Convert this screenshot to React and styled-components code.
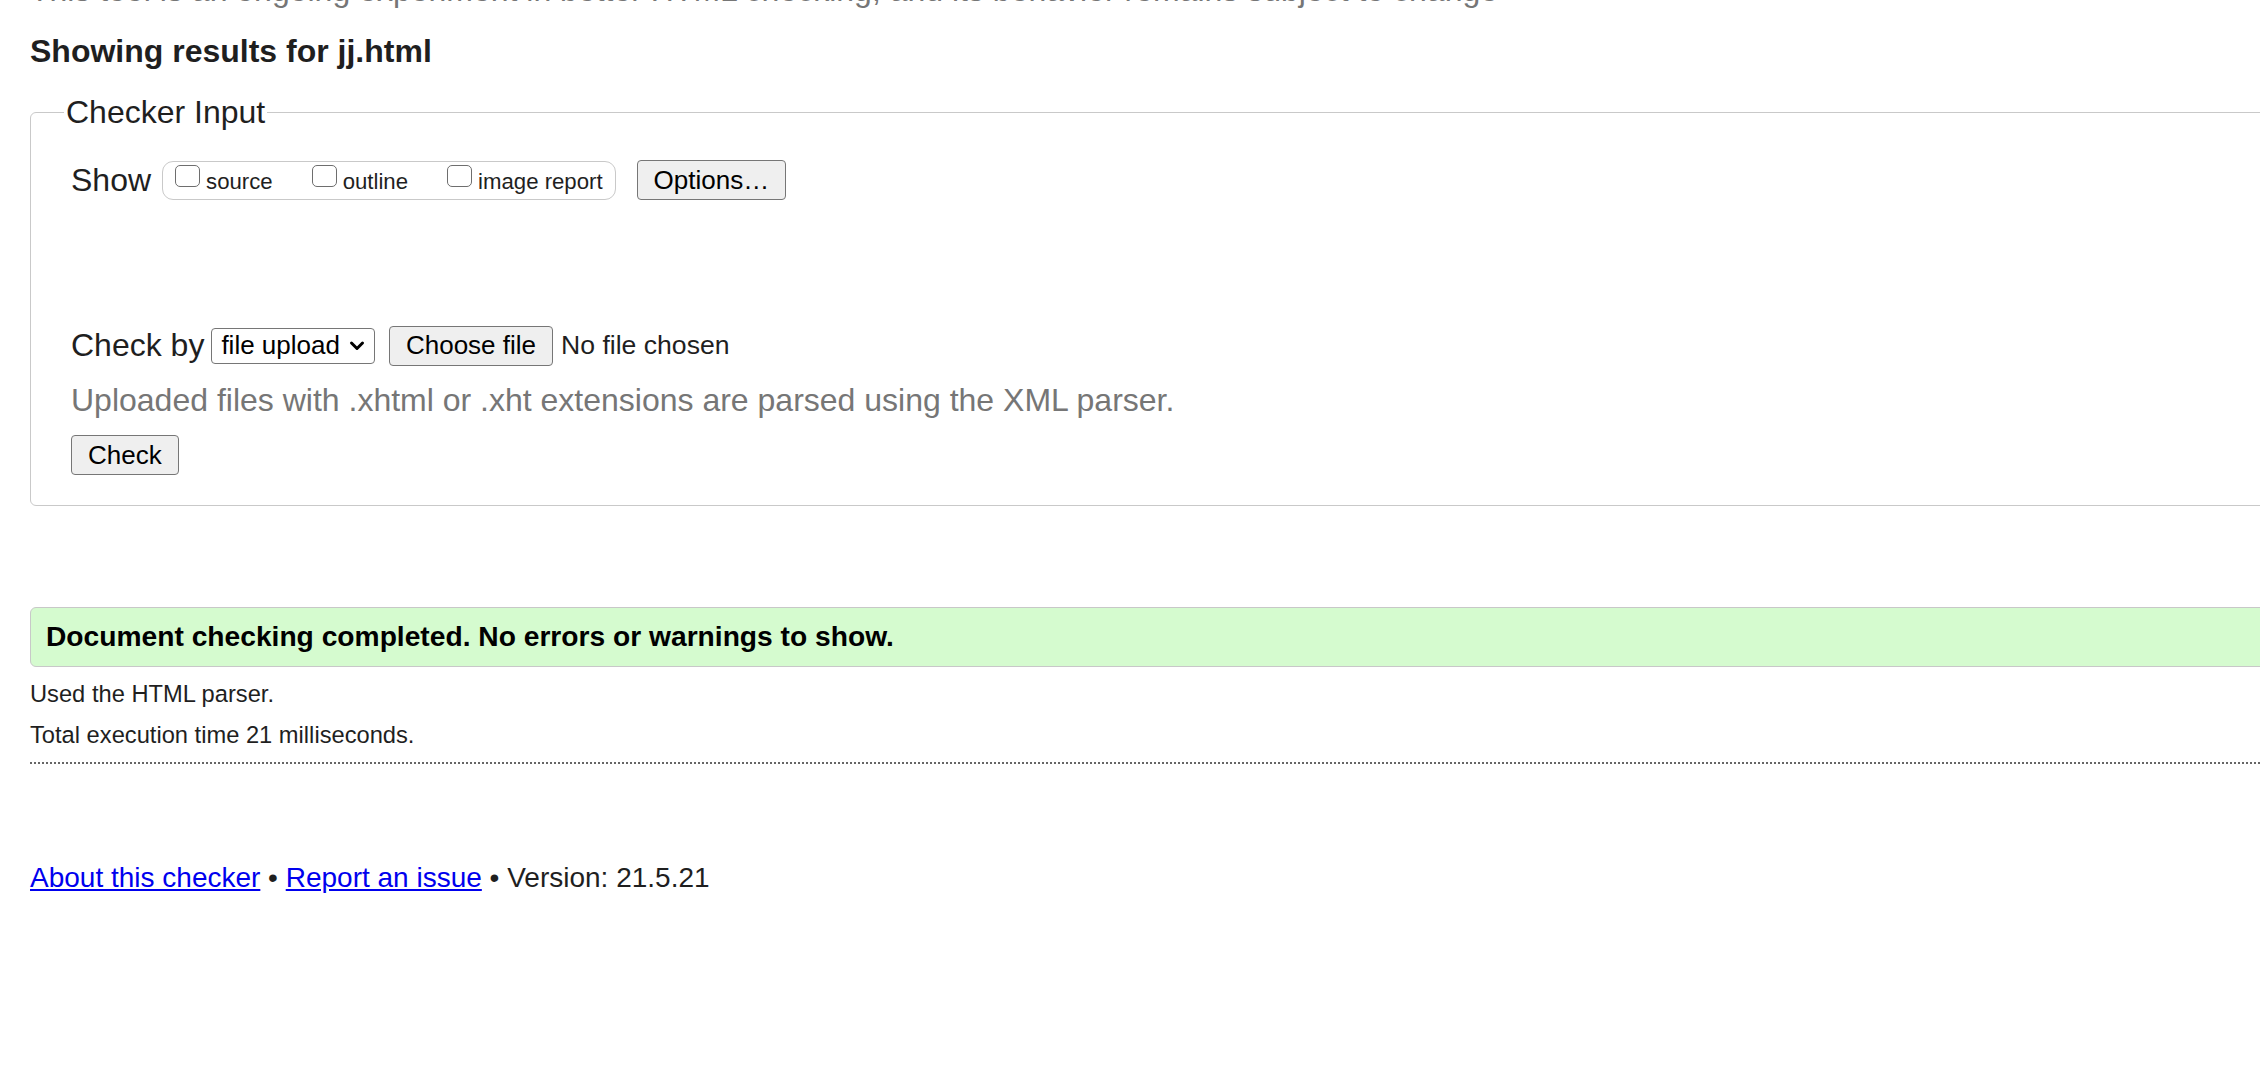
import React from "react";
import styled, { createGlobalStyle } from "styled-components";

const GlobalStyle = createGlobalStyle`
  html, body {
    margin: 0;
    padding: 0;
    overflow: hidden;
    background: #fff;
  }
  body {
    font-family: "Liberation Sans", Arial, Helvetica, sans-serif;
    color: #1f1f1f;
  }
`;

export default function App() {
  return (
    <>
      <GlobalStyle />
      <Page>
        <Intro>
          This tool is an ongoing experiment in better HTML checking, and its behavior remains subject to change
        </Intro>
        <ResultsTitle>Showing results for jj.html</ResultsTitle>

        <CheckerInput>
          <Legend>Checker Input</Legend>
          <Row>
            <FieldLabel>Show</FieldLabel>
            <ShowGroup>
              {["source", "outline", "image report"].map((name) => (
                <CheckLabel key={name}>
                  <Checkbox type="checkbox" />
                  {name}
                </CheckLabel>
              ))}
            </ShowGroup>
            <Button $ml="21px">Options…</Button>
          </Row>

          <Row $mt="125.5px">
            <FieldLabel>Check by</FieldLabel>
            <SelectBox>
              file upload
              <svg width="16" height="12" viewBox="0 0 16 12">
                <path d="M2.5 3 L8 8.5 L13.5 3" fill="none" stroke="#000" strokeWidth="3" strokeLinecap="round" strokeLinejoin="round" />
              </svg>
            </SelectBox>
            <Button $ml="14px">Choose file</Button>
            <FileName>No file chosen</FileName>
          </Row>
          <Hint>Uploaded files with .xhtml or .xht extensions are parsed using the XML parser.</Hint>
          <Button>Check</Button>
        </CheckerInput>

        <Success>Document checking completed. No errors or warnings to show.</Success>
        <Detail>Used the HTML parser.</Detail>
        <Detail>Total execution time 21 milliseconds.</Detail>
        <Divider />

        <Footer>
          <Link href="#">About this checker</Link> • <Link href="#">Report an issue</Link> • Version: 21.5.21
        </Footer>
      </Page>
    </>
  );
}

const Page = styled.div`
  width: 2500px;
  padding-left: 30px;
  box-sizing: border-box;
`;

const Intro = styled.p`
  margin: -28px 0 0;
  font-size: 32px;
  color: #767676;
  white-space: nowrap;
`;

const ResultsTitle = styled.h2`
  margin: 23.7px 0 0;
  font-size: 32px;
  font-weight: 700;
  color: #1f1f1f;
`;

const CheckerInput = styled.fieldset`
  margin: 24.5px 0 0;
  padding: 29px 40px 29.5px 40px;
  border: 1.5px solid #c9c9c9;
  border-radius: 6px;
  min-width: 0;
`;

const Legend = styled.legend`
  margin-left: -7px;
  padding: 0 2px;
  font-size: 32px;
`;

const Row = styled.div`
  display: flex;
  align-items: center;
  margin-top: ${(p) => p.$mt || "0"};
`;

const FieldLabel = styled.span`
  font-size: 32px;
`;

const ShowGroup = styled.div`
  display: flex;
  align-items: center;
  gap: 39px;
  height: 39px;
  box-sizing: border-box;
  margin-left: 11px;
  padding: 0 12px;
  border: 1.5px solid #c9c9c9;
  border-radius: 11px;
`;

const CheckLabel = styled.label`
  display: flex;
  align-items: center;
  gap: 6px;
  padding-top: 4px;
  font-size: 22.2px;
`;

const Checkbox = styled.input`
  appearance: none;
  flex: none;
  width: 25px;
  height: 22px;
  margin: 0 0 13px;
  border: 1.5px solid #6e6e6e;
  border-radius: 5px;
  background: #fff;
  box-sizing: border-box;
`;

const Button = styled.button`
  display: inline-flex;
  align-items: center;
  justify-content: center;
  height: 40px;
  margin-left: ${(p) => p.$ml || "0"};
  padding: 0 16px;
  font-family: inherit;
  font-size: 26px;
  color: #000;
  background: #efefef;
  border: 1.5px solid #767676;
  border-radius: 4px;
`;

const SelectBox = styled.div`
  display: flex;
  align-items: center;
  gap: 9px;
  height: 36px;
  box-sizing: border-box;
  margin-left: 7px;
  padding: 0 9px;
  font-size: 26px;
  color: #000;
  background: #fff;
  border: 1.5px solid #767676;
  border-radius: 4px;
`;

const FileName = styled.span`
  margin-left: 8px;
  font-size: 26.6px;
`;

const Hint = styled.p`
  margin: 16px 0 16.5px;
  font-size: 32px;
  color: #767676;
`;

const Success = styled.div`
  margin-top: 101px;
  padding: 12.5px 15px;
  font-size: 28.2px;
  font-weight: 700;
  color: #000;
  background: #d5fbcf;
  border: 1.5px solid #c8c8c8;
  border-radius: 6px;
`;

const Detail = styled.p`
  margin: 14px 0 0;
  font-size: 23.7px;
`;

const Divider = styled.hr`
  margin: 12.9px 0 0;
  border: 0;
  border-top: 2px dotted #666;
`;

const Footer = styled.p`
  margin: 98.9px 0 0;
  font-size: 28px;
`;

const Link = styled.a`
  color: #0000ee;
  text-decoration: underline;
`;
